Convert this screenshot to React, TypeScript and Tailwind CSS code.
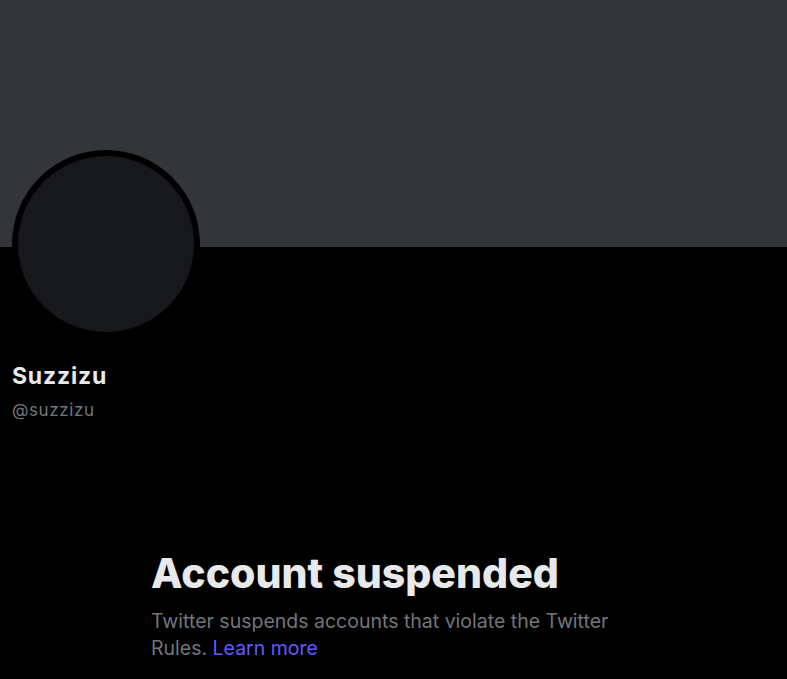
export default function App() {
  return (
    <div className="min-h-screen bg-black font-['Inter','Liberation_Sans',sans-serif]">
      <div className="h-[247px] bg-[#333639]" />
      <div className="px-3">
        <div className="-mt-[97px] h-[188px] w-[188px] rounded-full border-[6px] border-black bg-[#17181c]" />
        <div className="mt-[26px] text-[23px] leading-6 font-bold tracking-[0.8px] text-[#e7e9ea]">Suzzizu</div>
        <div className="mt-3 text-[17px] leading-5 tracking-[0.6px] text-[#71767b]">@suzzizu</div>
      </div>
      <div className="ml-[151px] mt-[130px] w-[470px]">
        <h1 className="text-[41px] leading-[46px] font-extrabold text-[#e7e9ea]">
          Account suspended
        </h1>
        <p className="mt-3 text-[19.5px] leading-[27px] text-[#71767b]">
          Twitter suspends accounts that violate the Twitter Rules.{" "}
          <a href="#" className="text-[#5f5cff]">
            Learn more
          </a>
        </p>
      </div>
    </div>
  );
}
